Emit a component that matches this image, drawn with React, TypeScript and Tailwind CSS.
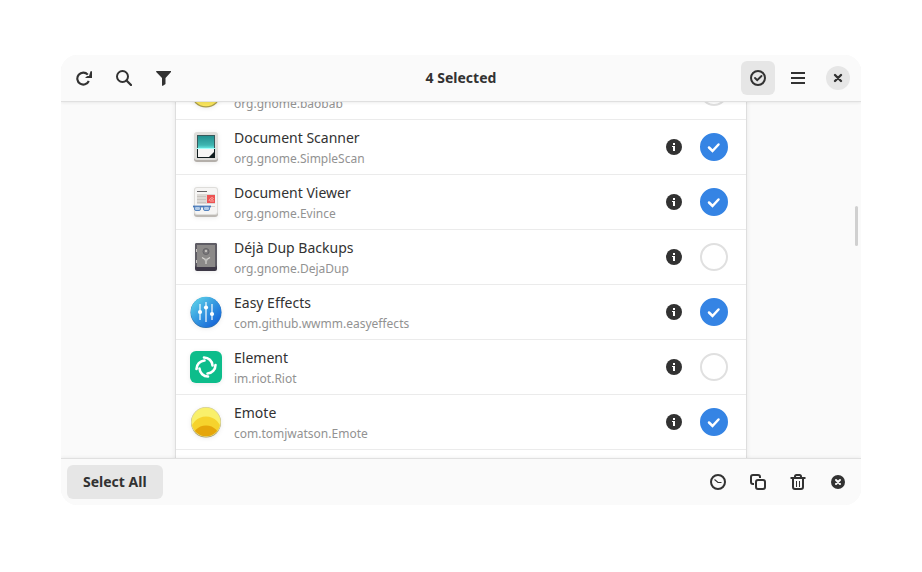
import React, { useState } from "react";

type IconProps = { children: React.ReactNode; className?: string };

function Glyph({ children, className = "size-4" }: IconProps) {
  return (
    <svg viewBox="0 0 16 16" className={className} fill="none" stroke="currentColor" aria-hidden="true">
      {children}
    </svg>
  );
}

function AppIcon({ children }: { children: React.ReactNode }) {
  return (
    <svg viewBox="0 0 32 32" className="size-8 shrink-0 drop-shadow-[0_1px_2px_rgba(0,0,0,0.08)]" aria-hidden="true">
      {children}
    </svg>
  );
}

function BaobabIcon() {
  return (
    <AppIcon>
      <circle cx="16" cy="16.600" r="15" fill="#a89c4c" />
      <circle cx="16" cy="15.800" r="14.500" fill="#f8e45c" />
    </AppIcon>
  );
}

function EmoteIcon() {
  return (
    <AppIcon>
      <defs>
        <clipPath id="emote-disc">
          <circle cx="16" cy="16" r="14.300" />
        </clipPath>
      </defs>
      <circle cx="16" cy="16.600" r="15" fill="#a8985a" />
      <circle cx="16" cy="16" r="15" fill="#d9d49a" />
      <g clipPath="url(#emote-disc)">
        <rect width="32" height="32" fill="#f9f06b" />
        <circle cx="16" cy="26" r="15.500" fill="#f6d32d" />
        <circle cx="16" cy="34" r="14.500" fill="#e5a50a" />
      </g>
    </AppIcon>
  );
}

function ScannerIcon() {
  return (
    <AppIcon>
      <defs>
        <linearGradient id="scan" x1="0" y1="0" x2="0" y2="1">
          <stop offset="0" stopColor="#218f8f" />
          <stop offset="0.7" stopColor="#3fb5b1" />
          <stop offset="1" stopColor="#6df0ea" />
        </linearGradient>
      </defs>
      <rect x="4" y="3" width="24" height="28" rx="3" fill="#b4afaa" />
      <rect x="4" y="1" width="24" height="28" rx="3" fill="#deddda" />
      <rect x="7" y="4" width="18" height="23" fill="#101c1e" />
      <rect x="7" y="4" width="18" height="14" fill="#37595b" />
      <rect x="8" y="5" width="16" height="13" fill="url(#scan)" />
      <path d="M8 18h16v3l-5 5H8z" fill="#f6f5f4" />
      <path d="M6.500 17.500h19" stroke="#a4fffa" />
    </AppIcon>
  );
}

function ViewerIcon() {
  return (
    <AppIcon>
      <rect x="4" y="3" width="24" height="28" rx="3" fill="#bdb9b4" />
      <rect x="4" y="1" width="24" height="28" rx="3" fill="#deddda" />
      <rect x="5" y="2" width="22" height="26" rx="2" fill="#f6f5f4" />
      <path d="M7 5.500h10" stroke="#656366" />
      <rect x="7" y="8" width="18" height="10" fill="#dcd9d5" />
      <rect x="17" y="9" width="8" height="8" fill="#ed5353" />
      <path d="M19 15c1-3 3-4 4-3s-1 2-2 1M20 15h4" fill="none" stroke="#ffc4bb" strokeWidth="0.8" />
      <path d="M7 10.500h9M7 13.500h9M7 16.500h9" stroke="#c4c0bb" strokeWidth="0.8" />
      <path d="M19 20.500h6" stroke="#d5d2ce" />
      <path d="M3 20.500h18" stroke="#4877b6" strokeWidth="1.800" />
      <rect x="4.500" y="20.500" width="6" height="4" rx="1.500" fill="#b3cbe6" stroke="#5583bf" />
      <rect x="13.500" y="20.500" width="6" height="4" rx="1.500" fill="#b3cbe6" stroke="#5583bf" />
    </AppIcon>
  );
}

function SafeIcon() {
  return (
    <AppIcon>
      <rect x="5" y="2" width="22" height="28" rx="2" fill="#3d3846" />
      <rect x="5" y="2" width="22" height="24" rx="2" fill="#5e5c64" />
      <rect x="7" y="4" width="18" height="22" fill="#8b8988" />
      <path d="M6.500 8v3M6.500 19v3" stroke="#c8c5c1" />
      <circle cx="16" cy="10.500" r="3" fill="#7c7a7c" stroke="#666468" />
      <circle cx="16" cy="10" r="1.200" fill="#c4c1be" />
      <path d="M12 16.500l4 2.500 4-2.500M16 19v4" fill="none" stroke="#d8d6d3" strokeWidth="1.200" />
      <circle cx="16" cy="19" r="1.500" fill="#c0bfbc" />
    </AppIcon>
  );
}

function EffectsIcon() {
  return (
    <AppIcon>
      <defs>
        <linearGradient id="effects" x1="0.1" y1="0.1" x2="0.85" y2="0.9">
          <stop offset="0" stopColor="#5ccfe8" />
          <stop offset="0.55" stopColor="#3193e0" />
          <stop offset="1" stopColor="#1766d8" />
        </linearGradient>
      </defs>
      <circle cx="16" cy="16.500" r="15.500" fill="#2e72b0" />
      <circle cx="16" cy="16" r="15.200" fill="url(#effects)" />
      <path d="M10 8v16M16 6v20M22 8v16" stroke="#fff" strokeOpacity="0.65" strokeWidth="1.800" />
      <circle cx="10" cy="16" r="2.100" fill="#fff" />
      <circle cx="16" cy="11.500" r="2.100" fill="#fff" />
      <circle cx="22" cy="18" r="2.100" fill="#fff" />
    </AppIcon>
  );
}

function ElementIcon() {
  return (
    <AppIcon>
      <rect width="32" height="32" rx="6" fill="#0dbd8b" />
      <g fill="none" stroke="#fff" strokeWidth="2.600" strokeLinecap="round">
        <path d="M14 6.500a8.500 8.500 0 0 1 8.500 8" />
        <path d="M25.500 14a8.500 8.500 0 0 1-8 8.500" />
        <path d="M18 25.500a8.500 8.500 0 0 1-8.500-8" />
        <path d="M6.500 18a8.500 8.500 0 0 1 8-8.500" />
      </g>
    </AppIcon>
  );
}

type AppEntry = { name: string; id: string; icon: React.ReactNode; selected: boolean };

const apps: AppEntry[] = [
  { name: "Disk Usage Analyzer", id: "org.gnome.baobab", icon: <BaobabIcon />, selected: false },
  { name: "Document Scanner", id: "org.gnome.SimpleScan", icon: <ScannerIcon />, selected: true },
  { name: "Document Viewer", id: "org.gnome.Evince", icon: <ViewerIcon />, selected: true },
  { name: "Déjà Dup Backups", id: "org.gnome.DejaDup", icon: <SafeIcon />, selected: false },
  { name: "Easy Effects", id: "com.github.wwmm.easyeffects", icon: <EffectsIcon />, selected: true },
  { name: "Element", id: "im.riot.Riot", icon: <ElementIcon />, selected: false },
  { name: "Emote", id: "com.tomjwatson.Emote", icon: <EmoteIcon />, selected: true },
];

type ToolButtonProps = { label: string; active?: boolean; onClick?: () => void; children: React.ReactNode };

function ToolButton({ label, active = false, onClick, children }: ToolButtonProps) {
  return (
    <button
      type="button"
      aria-label={label}
      onClick={onClick}
      className={`flex size-[34px] items-center justify-center rounded-md ${active ? "bg-[#e6e6e6]" : ""}`}
    >
      {children}
    </button>
  );
}

type RowProps = { app: AppEntry; checked: boolean; onToggle: () => void };

function AppRow({ app, checked, onToggle }: RowProps) {
  return (
    <li className="flex h-[55px] items-center border-b border-[#ebebeb] pr-[18px] pl-[14px]">
      {app.icon}
      <label htmlFor={app.id} className="ml-3 min-w-0 flex-1 pt-1">
        <span className="block truncate text-sm leading-5">{app.name}</span>
        <span className="block truncate text-xs leading-[22px] text-[#929292]">{app.id}</span>
      </label>
      <button type="button" aria-label={`About ${app.name}`} className="flex size-[34px] items-center justify-center">
        <Glyph>
          <circle cx="8" cy="8" r="8" fill="currentColor" stroke="none" />
          <path d="M7 4h2v2H7zM6 7h3v5H7V8H6z" fill="#fff" stroke="none" />
        </Glyph>
      </button>
      <span className="relative ml-[9px] flex size-7">
        <input
          id={app.id}
          type="checkbox"
          checked={checked}
          onChange={onToggle}
          className="size-7 appearance-none rounded-full border-2 border-[#e0e0e0] checked:border-[#3584e4] checked:bg-[#3584e4]"
        />
        {checked && (
          <Glyph className="pointer-events-none absolute top-1.5 left-1.5 size-4 text-white">
            <path d="M3 8.500l3.500 3.500 6-6.500" strokeWidth="2.500" strokeLinecap="round" />
          </Glyph>
        )}
      </span>
    </li>
  );
}

export default function App() {
  const [selected, setSelected] = useState<string[]>(apps.filter((a) => a.selected).map((a) => a.id));
  const toggle = (id: string) =>
    setSelected((ids) => (ids.includes(id) ? ids.filter((other) => other !== id) : [...ids, id]));

  return (
    <div className="flex h-screen bg-white px-[61px] pt-[55px] pb-[67px] font-['Noto_Sans',sans-serif] text-[#323232]">
      <div className="flex min-w-0 flex-1 flex-col overflow-hidden rounded-2xl bg-[#fafafa]">
        <header className="z-10 grid grid-cols-[1fr_auto_1fr] items-center border-b border-[#e0e0e0] bg-[#fafafa] p-1.5 shadow-[0_1px_3px_rgba(0,0,0,0.07)]">
          <div className="flex gap-1.5">
            <ToolButton label="Refresh">
              <Glyph>
                <path d="M11.800 4.600A6 6 0 1 0 12.800 11" strokeWidth="2.100" />
                <path d="M16 1.300V8H9.500V7.300L11.500 6H13l1.500-4.700z" fill="currentColor" stroke="none" />
              </Glyph>
            </ToolButton>
            <ToolButton label="Search">
              <Glyph>
                <circle cx="6.500" cy="6.500" r="5.500" strokeWidth="2" />
                <path d="M10.500 10.500l4.500 4.500" strokeWidth="2.300" strokeLinecap="round" />
              </Glyph>
            </ToolButton>
            <ToolButton label="Filter">
              <Glyph>
                <path d="M.2 1h14.800v1L9.500 8v6L7 15.800H6V8L.2 2z" fill="currentColor" stroke="none" />
              </Glyph>
            </ToolButton>
          </div>
          <h1 className="text-sm font-bold">{selected.length} Selected</h1>
          <div className="flex justify-end gap-1.5">
            <ToolButton label="Selection mode" active>
              <Glyph>
                <circle cx="8" cy="8" r="7" strokeWidth="2" />
                <path d="M5 8l2.200 2.200L11.500 6" strokeWidth="1.900" strokeLinecap="round" />
              </Glyph>
            </ToolButton>
            <ToolButton label="Main menu">
              <Glyph>
                <path d="M1 3h14M1 8h14M1 13h14" strokeWidth="2" />
              </Glyph>
            </ToolButton>
            <ToolButton label="Close">
              <span className="flex size-6 items-center justify-center rounded-full bg-[#e6e6e6]">
                <Glyph>
                  <path d="M5 5l6 6M11 5l-6 6" strokeWidth="2.400" strokeLinecap="round" />
                </Glyph>
              </span>
            </ToolButton>
          </div>
        </header>

        <main className="relative min-h-0 flex-1 overflow-hidden">
          <ul className="mx-auto -mt-[37px] h-[420px] max-w-[570px] bg-white shadow-[0_0_0_1px_rgba(0,0,0,0.07),0_0_5px_1px_rgba(0,0,0,0.08)]">
            {apps.map((app) => (
              <AppRow key={app.id} app={app} checked={selected.includes(app.id)} onToggle={() => toggle(app.id)} />
            ))}
          </ul>
          <div className="absolute top-[104px] right-[3px] h-10 w-[3px] rounded-full bg-[#d0d0d0]" />
        </main>

        <footer className="z-10 flex items-center justify-between border-t border-[#e0e0e0] bg-[#fafafa] p-1.5 shadow-[0_-1px_3px_rgba(0,0,0,0.05)]">
          <button
            type="button"
            onClick={() => setSelected(apps.map((a) => a.id))}
            className="h-[34px] rounded-md bg-[#e6e6e6] px-4 text-sm font-bold"
          >
            Select All
          </button>
          <div className="flex gap-1.5">
            <ToolButton label="Snapshots">
              <Glyph>
                <circle cx="8" cy="8" r="7" strokeWidth="2" />
                <path d="M4.500 5.500L8 8.500h3.500" strokeWidth="1.100" />
              </Glyph>
            </ToolButton>
            <ToolButton label="Copy">
              <Glyph>
                <rect x="6" y="6" width="9" height="9" rx="2" strokeWidth="2" />
                <path d="M4 10H3a2 2 0 0 1-2-2V3a2 2 0 0 1 2-2h5a2 2 0 0 1 2 2v1" strokeWidth="2" />
              </Glyph>
            </ToolButton>
            <ToolButton label="Uninstall">
              <Glyph>
                <path d="M.5 4h15M5 4V2.500A1.500 1.500 0 0 1 6.500 1h3A1.500 1.500 0 0 1 11 2.500V4M3 4v9a2 2 0 0 0 2 2h6a2 2 0 0 0 2-2V4" strokeWidth="2" />
                <path d="M6.500 7v6M9.500 7v6" />
              </Glyph>
            </ToolButton>
            <ToolButton label="Clear selection">
              <Glyph>
                <circle cx="8" cy="8" r="7" fill="currentColor" stroke="none" />
                <path d="M6 6l4 4M10 6l-4 4" stroke="#fafafa" strokeWidth="2" strokeLinecap="round" />
              </Glyph>
            </ToolButton>
          </div>
        </footer>
      </div>
    </div>
  );
}
